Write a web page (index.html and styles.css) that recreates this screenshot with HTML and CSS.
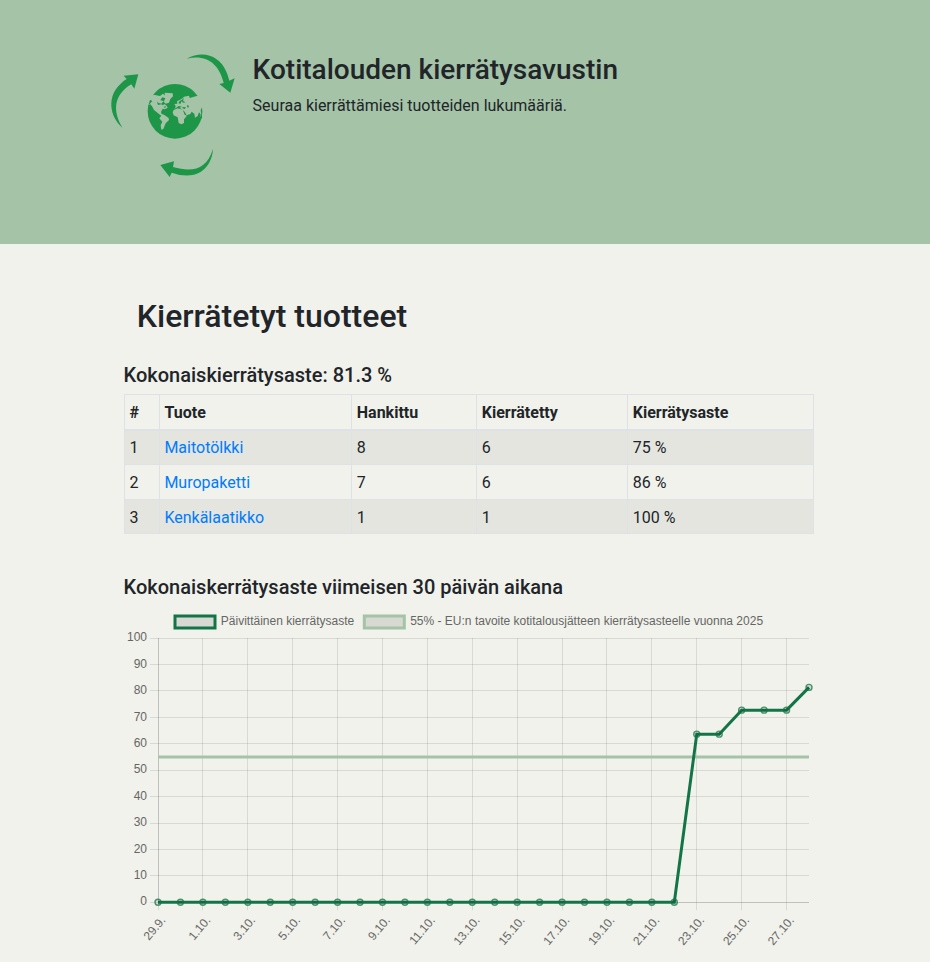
FILE: index.html
```html
<!DOCTYPE html>
<html lang="fi">
<head>
<meta charset="utf-8">
<title>Kotitalouden kierrätysavustin</title>
<link rel="stylesheet" href="styles.css">
</head>
<body>
<header class="hero">
  <svg class="logo" viewBox="0 0 435 420" aria-hidden="true">
    <g class="logo-green">
      <path d="M260 41C311 14 358 33 378 78Q384 90 388 107L404 100L391 143L358 117L371 114C358 59 322 27 260 41Z"/>
      <path d="M67 248C25 210 24 152 59 119Q68 108 80 102L71 92L115 88L103 131L94 118C46 147 34 192 67 248Z"/>
      <path d="M339 312C337 353 310 389 270 391Q241 393 215 383L209 396L181 360L222 349L219 366C277 383 320 374 339 312Z"/>
      <circle cx="225" cy="199" r="82"/>
    </g>
    <g class="logo-land">
      <path d="M146 180L157 168L147 163L152 151L165 150L180 153L189 146L195 151L194 143L218 145L219 154L211 162L207 173L197 176L191 170L196 160L187 157L181 166L191 168L184 176L176 174L171 170L174 180L184 178L189 181L193 177L200 182L203 188L194 193L188 191L183 201L185 207L192 209L206 219L207 225L197 235L190 252L184 254L182 241L187 230L178 220L184 212L176 206L162 195L156 184L151 178Z"/>
      <path d="M227 183L223 177L232 176L231 169L240 164L248 160L252 155L267 152L269 159L290 153L300 152L309 175L307 188L305 217L299 218L302 208L297 202L293 213L285 218L283 206L275 200L271 207L260 211L254 200L244 192L239 188L246 185L236 183L222 193L226 188Z"/>
      <path d="M221 195L233 190L248 194L254 209L261 212L252 223L252 234L244 238L236 234L233 217L221 211L218 202Z"/>
    </g>
    <g class="logo-green">
      <path d="M239 168L248 163L252 159L249 168L257 172L249 173L245 168L241 177L235 174Z"/>
      <path d="M247 186L258 187L254 192L248 190ZM262 180L267 183L265 188L261 185ZM191 185L198 184L195 190Z"/>
      <path d="M306 187V218L302 224L299 218L304 208L302 196Z"/>
    </g>
  </svg>
  <div class="hero-text">
    <h1>Kotitalouden kierrätysavustin</h1>
    <p>Seuraa kierrättämiesi tuotteiden lukumääriä.</p>
  </div>
</header>
<main class="content">
  <h2>Kierrätetyt tuotteet</h2>
  <h3>Kokonaiskierrätysaste: 81.3 %</h3>
  <table>
    <colgroup><col class="c-num"><col class="c-name"><col class="c-got"><col class="c-rec"><col class="c-rate"></colgroup>
    <thead><tr><th>#</th><th>Tuote</th><th>Hankittu</th><th>Kierrätetty</th><th>Kierrätysaste</th></tr></thead>
    <tbody>
      <tr><td>1</td><td><a href="#">Maitotölkki</a></td><td>8</td><td>6</td><td>75 %</td></tr>
      <tr><td>2</td><td><a href="#">Muropaketti</a></td><td>7</td><td>6</td><td>86 %</td></tr>
      <tr><td>3</td><td><a href="#">Kenkälaatikko</a></td><td>1</td><td>1</td><td>100 %</td></tr>
    </tbody>
  </table>
  <h3 class="chart-title">Kokonaiskerrätysaste viimeisen 30 päivän aikana</h3>
  <svg class="chart" id="chart" width="694" height="352" viewBox="0 0 694 352"></svg>
</main>
<script src="chart.js"></script>
</body>
</html>
```
FILE: styles.css
```css
* { box-sizing: border-box; }
body {
  margin: 0;
  background: #f1f2eb;
  color: #212529;
  font: 400 16px/1.5 Roboto, sans-serif;
  height: 962px;
  overflow: hidden;
}
h1, h2, h3 { margin: 0; font-weight: 500; line-height: 1.2; }
.hero {
  display: flex;
  height: 244px;
  padding: 45px 0 0 100px;
  background: #a4c3a7;
}
.logo { width: 145px; height: 140px; flex: none; }
.logo-green { fill: #1e9648; }
.logo-land { fill: #a4c3a7; }
.hero-text { padding: 8px 0 0 7.6px; }
.hero-text h1 { font-size: 28px; margin-bottom: 7px; }
.hero-text p { margin: 0; }
.content { width: 693.6px; margin-left: 123.6px; padding-top: 53px; }
.content h2 { font-size: 32px; margin: 0 0 27.6px 13.2px; }
.content h3 { font-size: 20px; margin-bottom: 7.4px; }
table {
  width: 690px;
  table-layout: fixed;
  border-collapse: collapse;
  border: 1px solid #dee2e6;
  margin-bottom: 40.9px;
}
.c-num { width: 35px; }
.c-name { width: 192px; }
.c-got { width: 125px; }
.c-rec { width: 151px; }
th, td {
  padding: 5.3px 4.8px 4.1px;
  border: 1px solid #dee2e6;
  text-align: left;
}
tr:nth-child(2) td { padding-top: 5.8px; padding-bottom: 3.6px; }
tr:nth-child(3) td { padding-top: 6.3px; padding-bottom: 3.1px; }
th:nth-child(n+3), td:nth-child(n+3) { padding-left: 5.2px; }
th { font-weight: 700; border-bottom-width: 2px; }
tbody tr:nth-child(odd) { background: rgba(0, 0, 0, .05); }
a { color: #007bff; text-decoration: none; }
.content .chart-title { margin-bottom: 6.9px; }
.chart { display: block; overflow: visible; margin-left: .4px; }
.chart text { font: 12px "Liberation Sans", sans-serif; fill: #666; }
.grid { stroke: rgba(0, 0, 0, .1); fill: none; }
.axis { stroke: rgba(0, 0, 0, .2); fill: none; }
.rate { stroke: #137547; stroke-width: 3; fill: none; }
.goal { stroke: #a4c3a7; stroke-width: 3; fill: none; }
.point { stroke: #137547; stroke-width: 1.4; stroke-opacity: .75; fill: rgba(0, 0, 0, .1); }
.swatch { fill: rgba(0, 0, 0, .1); }
```
FILE: chart.js
```js
const svg = document.getElementById("chart");
// Plot area inside the SVG
const left = 34, right = 685, top_ = 32, bottom = 296.2;
const rates = [...Array(24).fill(0), 63.6, 63.6, 72.7, 72.7, 72.7, 81.3];
const dates = ["29.9.", "1.10.", "3.10.", "5.10.", "7.10.", "9.10.", "11.10.", "13.10.",
  "15.10.", "17.10.", "19.10.", "21.10.", "23.10.", "25.10.", "27.10."];
const step = (right - left) / 29;
const y = v => bottom - (bottom - top_) * v / 100;
const snap = n => Math.floor(n) + 0.5;

function add(tag, attrs, text) {
  const el = document.createElementNS("http://www.w3.org/2000/svg", tag);
  for (const k in attrs) el.setAttribute(k, attrs[k]);
  if (text) el.textContent = text;
  svg.appendChild(el);
}

for (let v = 0; v <= 100; v += 10) {
  const gy = snap(y(v) + 0.1);
  add("path", { class: v ? "grid" : "axis", d: `M${v ? left - 8 : left} ${gy}H${right}` });
  if (!v) add("path", { class: "grid", d: `M${left - 8} ${gy}H${left}` });
  add("text", { x: 23, y: Math.round(y(v) + 3.25), "text-anchor": "end" }, String(v));
}
dates.forEach((label, i) => {
  const gx = snap(left + i * 2 * step);
  add("path", { class: i ? "grid" : "axis", d: `M${gx} ${top_}V${bottom}` });
  add("path", { class: "grid", d: `M${gx} ${bottom}V${bottom + 8}` });
  add("text", { transform: `translate(${left + i * 2 * step + 3.6} ${bottom + 14.4}) rotate(-50)`, x: 0, y: 6, "text-anchor": "end" }, label);
});

add("path", { class: "goal", d: `M${left} ${y(55)}H${right}` });
add("path", { class: "rate", d: "M" + rates.map((v, i) => `${left + i * step} ${y(v)}`).join("L") });
rates.forEach((v, i) => add("circle", { class: "point", cx: left + i * step, cy: y(v), r: 3 }));

add("rect", { class: "swatch", x: 51, y: 10, width: 40, height: 12, stroke: "#137547", "stroke-width": 3 });
add("text", { x: 96.8, y: 19 }, "Päivittäinen kierrätysaste");
add("rect", { class: "swatch", x: 240.3, y: 10, width: 40, height: 12, stroke: "#a4c3a7", "stroke-width": 3 });
add("text", { x: 286.2, y: 19 }, "55% - EU:n tavoite kotitalousjätteen kierrätysasteelle vuonna 2025");
```
